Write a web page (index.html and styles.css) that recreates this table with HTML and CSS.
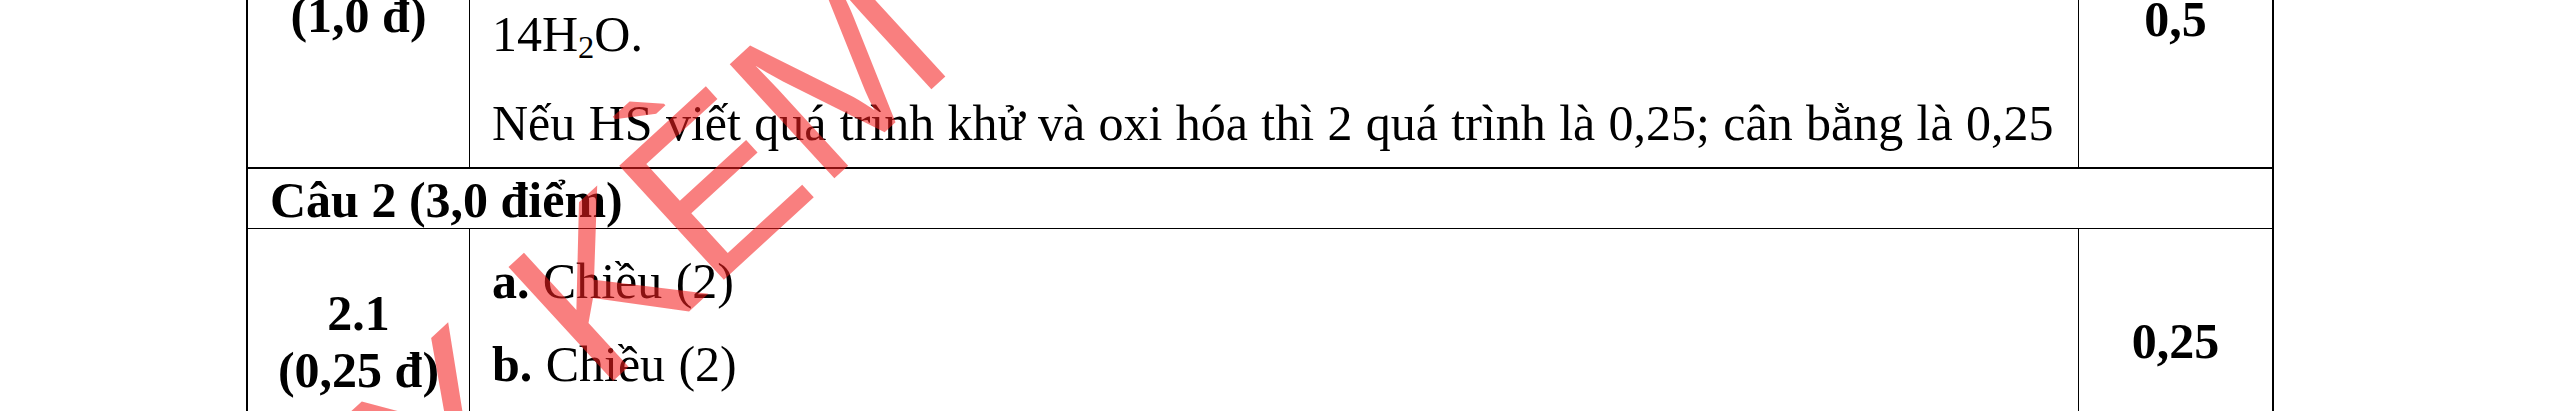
FILE: index.html
```html
<!DOCTYPE html>
<html lang="vi">

<head>
    <meta charset="UTF-8">
    <title>Hướng dẫn chấm</title>
    <link rel="stylesheet" href="styles.css">
</head>

<body>
    <div class="sheet">
        <table class="grading">
            <colgroup>
                <col class="col-part">
                <col class="col-answer">
                <col class="col-score">
            </colgroup>
            <tr class="row-tail">
                <td class="part"><b>(1,0 đ)</b></td>
                <td class="answer">
                    <p>14H<sub>2</sub>O.</p>
                    <p>Nếu HS viết quá trình khử và oxi hóa thì 2 quá trình là 0,25; cân bằng là 0,25</p>
                </td>
                <td class="score"><b>0,5</b></td>
            </tr>
            <tr class="row-title">
                <td colspan="3"><b>Câu 2 (3,0 điểm)</b></td>
            </tr>
            <tr class="row-item">
                <td class="part"><b>2.1<br>(0,25 đ)</b></td>
                <td class="answer">
                    <p><b>a.</b> Chiều (2)</p>
                    <p><b>b.</b> Chiều (2)</p>
                </td>
                <td class="score"><b>0,25</b></td>
            </tr>
        </table>

        <!-- watermark sits over the table -->
        <div class="watermark">DẠY KÈM QUY NHƠN</div>
    </div>
</body>

</html>
```

FILE: styles.css
```css
body {
    margin: 0;
    background: #fff;
    color: #000;
    font-family: "Liberation Serif", "Times New Roman", serif;
    font-size: 50px;
    line-height: 1.15;
    overflow: hidden;
}

.sheet {
    position: relative;
    margin-top: -40px;
    padding-left: 246px;
}

.grading {
    border-collapse: separate;
    border-spacing: 0;
    table-layout: fixed;
    width: 2028px;
}

.col-part {
    width: 223px;
}

.col-answer {
    width: 1609px;
}

.col-score {
    width: 196px;
}

.grading td {
    box-sizing: border-box;
    padding: 0 22px;
    vertical-align: top;
    border-left: 1px solid #000;
}

.grading td.part {
    border-left-width: 2px;
    text-align: center;
    padding-left: 4px;
    padding-right: 4px;
}

.grading td.score {
    border-right: 2px solid #000;
    text-align: center;
    padding-left: 4px;
    padding-right: 4px;
}

.answer p {
    margin: 0;
    word-spacing: 0.85px;
}

sub {
    font-size: 0.65em;
    line-height: 0;
    vertical-align: -0.22em;
}

/* last row of question 1, cut at the top */
.row-tail td {
    height: 209px;
    border-bottom: 2px solid #000;
}

.row-tail .part {
    padding-top: 27px;
}

.row-tail .answer {
    padding-top: 46px;
}

.row-tail .answer p + p {
    margin-top: 31px;
}

.row-tail .score {
    padding-top: 31px;
}

/* question header spanning the table */
.row-title td {
    height: 60px;
    padding: 3px 22px 0;
    line-height: 56px;
    border-left-width: 2px;
    border-right: 2px solid #000;
    border-bottom: 1px solid #000;
}

.row-item td {
    height: 226px;
}

.row-item .part,
.row-item .score {
    vertical-align: middle;
}

.row-item .answer {
    padding-top: 24px;
}

.row-item .answer p + p {
    margin-top: 25px;
}

.watermark {
    position: absolute;
    left: 163px;
    top: 616px;
    transform-origin: 0 50%;
    transform: rotate(-42.5deg);
    font-family: "Liberation Sans", Arial, sans-serif;
    font-size: 225px;
    font-weight: 400;
    line-height: 1;
    white-space: nowrap;
    color: rgba(245, 30, 30, 0.57);
    pointer-events: none;
}
```
